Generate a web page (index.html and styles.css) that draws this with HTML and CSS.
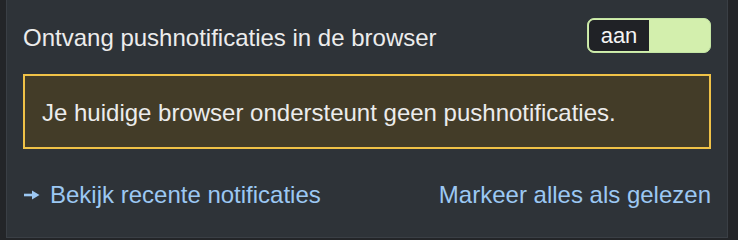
FILE: index.html
```html
<!DOCTYPE html>
<html lang="nl">
<head>
    <meta charset="UTF-8">
    <title>Notificaties</title>
    <link rel="stylesheet" href="styles.css">
</head>
<body>
<div class="panel">
    <div class="setting-row">
        <span class="setting-label">Ontvang pushnotificaties in de browser</span>
        <div class="toggle">
            <span class="toggle-state">aan</span>
        </div>
    </div>
    <div class="warning">Je huidige browser ondersteunt geen pushnotificaties.</div>
    <div class="links">
        <a href="#" class="link">
            <svg class="arrow" width="17" height="12" viewBox="0 0 17 12">
                <path d="M1 6 H11" stroke="#9cc8f3" stroke-width="2.6" fill="none"/>
                <path d="M9 1.5 L16.5 6 L9 10.5 Z" fill="#9cc8f3"/>
            </svg>
            Bekijk recente notificaties
        </a>
        <a href="#" class="link">Markeer alles als gelezen</a>
    </div>
</div>
</body>
</html>
```

FILE: styles.css
```css
body {
    margin: 0;
    background: #232528;
    font-family: "Liberation Sans", Arial, sans-serif;
    font-size: 24px;
    color: #ececec;
}
.panel {
    margin-left: 6px;
    width: 722px;
    height: 238px;
    box-sizing: border-box;
    background: #2e3338;
    border: 1px solid #3a3f45;
    border-top: none;
    padding: 18px 16px 0 16px;
}
.setting-row {
    display: flex;
    justify-content: space-between;
    align-items: center;
    height: 35px;
    line-height: 28px;
}
.setting-label {
    margin-top: 4px;
}
.toggle {
    width: 124px;
    height: 35px;
    box-sizing: border-box;
    border: 1.5px solid #c4e5a4;
    border-radius: 7px;
    background: #d3efad;
    padding: 1px;
    display: flex;
}
.toggle-state {
    width: 60px;
    background: #202226;
    border-radius: 5px 0 0 5px;
    color: #f4f4f4;
    font-size: 22px;
    display: flex;
    align-items: center;
    justify-content: center;
    padding-top: 1px;
}
.warning {
    margin-top: 21px;
    height: 75px;
    box-sizing: border-box;
    border: 2px solid #f0c247;
    background: #433c28;
    padding: 1px 17px 0;
    line-height: 71px;
}
.links {
    margin-top: 32px;
    display: flex;
    justify-content: space-between;
    align-items: center;
    line-height: 28px;
}
.link {
    color: #9cc8f3;
    text-decoration: none;
    display: flex;
    align-items: center;
}
.arrow {
    margin-right: 10px;
}
```
